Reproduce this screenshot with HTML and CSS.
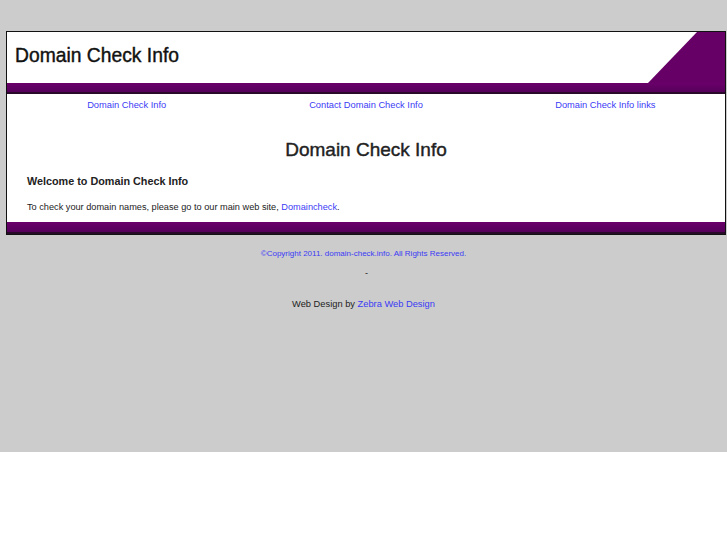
FILE: index.html
```html
<!DOCTYPE html>
<html lang="en">
<head>
    <meta charset="UTF-8">
    <title>Domain Check Info</title>
    <link rel="stylesheet" href="styles.css">
</head>
<body>
    <div class="page">
        <div class="frame">
            <div class="header">
                <h1 class="site-title">Domain Check Info</h1>
                <svg class="corner" width="77" height="51" viewBox="0 0 77 51">
                    <polygon points="49,0 77,0 77,51 0,51" fill="#660066"/>
                </svg>
            </div>
            <div class="bar"></div>
            <div class="nav">
                <a href="#">Domain Check Info</a>
                <a href="#">Contact Domain Check Info</a>
                <a href="#">Domain Check Info links</a>
            </div>
            <div class="content">
                <h2>Domain Check Info</h2>
                <h3>Welcome to Domain Check Info</h3>
                <p>To check your domain names, please go to our main web site, <a href="#">Domaincheck</a>.</p>
            </div>
            <div class="bar bar-bottom"></div>
        </div>
        <div class="footer">
            <p class="copyright"><a href="#">&copy;Copyright 2011. domain-check.info. All Rights Reserved.</a></p>
            <p class="dash">-</p>
            <p class="credit">Web Design by <a href="#">Zebra Web Design</a></p>
        </div>
    </div>
</body>
</html>
```

FILE: styles.css
```css
body {
    margin: 0;
    font-family: "Liberation Sans", Arial, sans-serif;
    color: #222;
    background-color: #fff;
}
a {
    color: #3b3bf5;
    text-decoration: none;
}
.page {
    background-color: #cccccc;
    height: 452px;
    padding-top: 31px;
    box-sizing: border-box;
}
.frame {
    margin: 0 1px 0 6px;
    border: 1px solid #111;
    background-color: #fff;
}
.header {
    display: flex;
    justify-content: space-between;
    align-items: stretch;
    height: 51px;
}
.site-title {
    margin: 0;
    padding-left: 8px;
    font-size: 19.3px;
    font-weight: normal;
    line-height: 48px;
    color: #111;
    -webkit-text-stroke: 0.4px #111;
}
.corner {
    display: block;
}
.bar {
    height: 9px;
    background: linear-gradient(#6a006a, #55005a);
    border-bottom: 2px solid #2a0a2a;
}
.bar-bottom {
    height: 10px;
}
.nav {
    display: flex;
    padding: 5px 0 3px;
}
.nav a {
    flex: 1;
    text-align: center;
    font-size: 9.3px;
    line-height: 12px;
}
.content {
    padding: 0 20px 9px;
}
.content h2 {
    margin: 25px 0 0;
    text-align: center;
    font-size: 19px;
    font-weight: normal;
    -webkit-text-stroke: 0.4px #222;
    line-height: 22px;
}
.content h3 {
    margin: 13px 0 0;
    font-size: 10.8px;
    line-height: 14px;
}
.content p {
    margin: 13px 0 0;
    font-size: 9.2px;
    line-height: 12px;
}
.footer {
    text-align: center;
}
.footer p {
    margin: 0;
}
.copyright {
    padding-top: 14px;
    font-size: 8px;
    line-height: 10px;
}
.dash {
    padding-top: 9px;
    padding-left: 6px;
    font-size: 9px;
    line-height: 10px;
}
.credit {
    padding-top: 20px;
    font-size: 9.3px;
    line-height: 12px;
}
```
